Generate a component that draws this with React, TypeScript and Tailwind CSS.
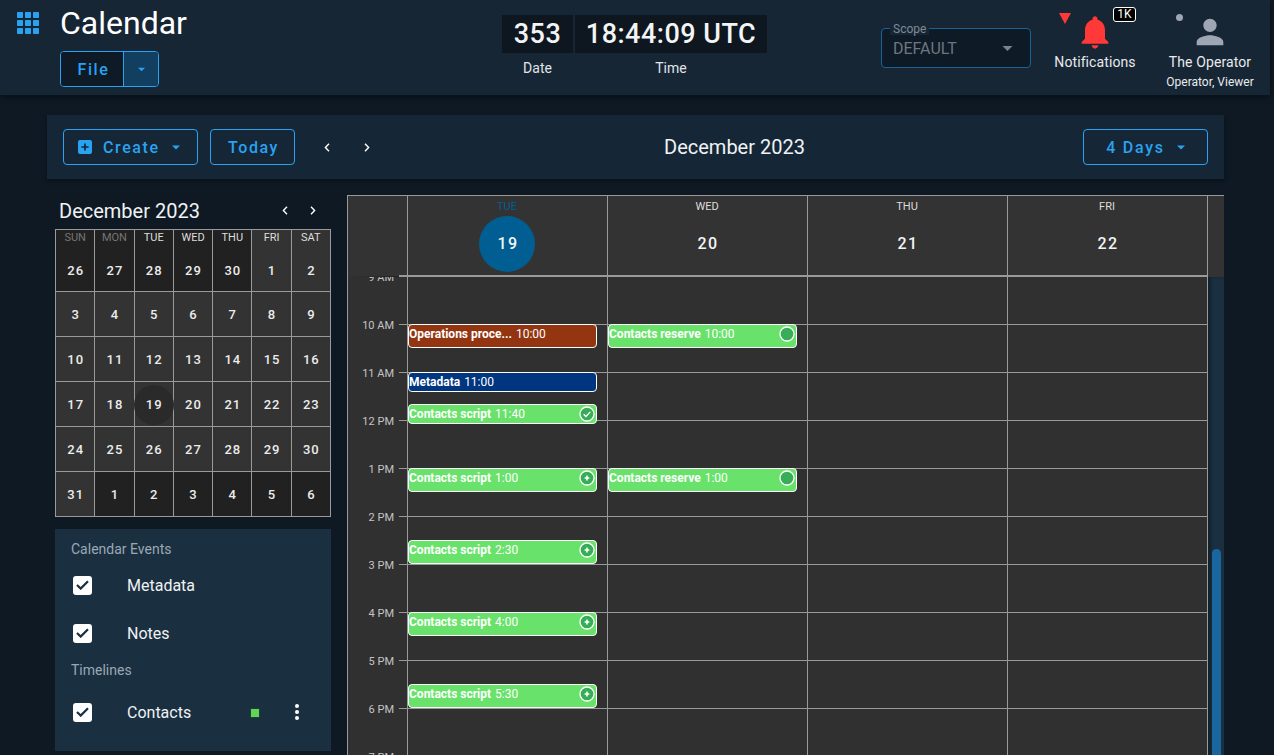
import React from "react";

const Caret = ({ className = "" }: { className?: string }) => (
  <svg width="10" height="5" viewBox="0 0 10 5" className={className}>
    <path d="M0 0h10L5 5z" fill="currentColor" />
  </svg>
);

const Chevron = ({ dir }: { dir: "l" | "r" }) => (
  <svg width="6" height="9" viewBox="0 0 6 9" fill="none" stroke="#ffffff" strokeWidth="1.4">
    <path d={dir === "l" ? "M5 .8 1.4 4.5 5 8.2" : "M1 .8 4.6 4.5 1 8.2"} />
  </svg>
);

const Check = () => (
  <div className="w-[19px] h-[19px] bg-white rounded-[3px] flex items-center justify-center">
    <svg width="13" height="10" viewBox="0 0 13 10" fill="none" stroke="#1a2f40" strokeWidth="2.2">
      <path d="M1 5l3.7 3.6L12 1.2" />
    </svg>
  </div>
);

const weekdays = [
  ["SUN", "text-[#767676]"],
  ["MON", "text-[#767676]"],
  ["TUE", "text-[#dddddd]"],
  ["WED", "text-[#dddddd]"],
  ["THU", "text-[#dddddd]"],
  ["FRI", "text-[#dddddd]"],
  ["SAT", "text-[#dddddd]"],
];

const weeks = [
  [26, 27, 28, 29, 30, 1, 2],
  [3, 4, 5, 6, 7, 8, 9],
  [10, 11, 12, 13, 14, 15, 16],
  [17, 18, 19, 20, 21, 22, 23],
  [24, 25, 26, 27, 28, 29, 30],
  [31, 1, 2, 3, 4, 5, 6],
];

const hours = ["9 AM", "10 AM", "11 AM", "12 PM", "1 PM", "2 PM", "3 PM", "4 PM", "5 PM", "6 PM", "7 PM"];

type Ev = { t: string; time: string; cls: string; icon?: "check" | "plus" | "dot" };

const tue: Ev[] = [
  { t: "Operations proce...", time: "10:00", cls: "top-[47px] h-[24px] bg-[#933510]" },
  { t: "Metadata", time: "11:00", cls: "top-[95px] h-[20px] bg-[#003580]" },
  { t: "Contacts script", time: "11:40", cls: "top-[127px] h-[20px] bg-[#69e26b]", icon: "check" },
  { t: "Contacts script", time: "1:00", cls: "top-[191px] h-[24px] bg-[#69e26b]", icon: "plus" },
  { t: "Contacts script", time: "2:30", cls: "top-[263px] h-[24px] bg-[#69e26b]", icon: "plus" },
  { t: "Contacts script", time: "4:00", cls: "top-[335px] h-[24px] bg-[#69e26b]", icon: "plus" },
  { t: "Contacts script", time: "5:30", cls: "top-[407px] h-[24px] bg-[#69e26b]", icon: "plus" },
];

const wed: Ev[] = [
  { t: "Contacts reserve", time: "10:00", cls: "top-[47px] h-[24px] bg-[#69e26b]", icon: "dot" },
  { t: "Contacts reserve", time: "1:00", cls: "top-[191px] h-[24px] bg-[#69e26b]", icon: "dot" },
];

const EvIcon = ({ kind }: { kind: "check" | "plus" | "dot" }) => (
  <svg width="16" height="16" viewBox="0 0 16 16" className="absolute right-[1px] top-[1px]">
    <circle cx="8" cy="8" r="7" fill="#37ad57" stroke="#ffffff" strokeWidth="1.3" />
    {kind === "check" && <path d="M4.6 8.2l2.3 2.3 4.4-4.6" fill="none" stroke="#ffffff" strokeWidth="1.3" />}
    {kind === "plus" && <path d="M8 5.6v4.8M5.6 8h4.8" fill="none" stroke="#ffffff" strokeWidth="1.6" />}
  </svg>
);

const DayCol = ({ events = [] }: { events?: Ev[] }) => (
  <div className="relative border-l border-[#9a9a9a]">
    {hours.map((h) => (
      <div key={h} className="h-[48px] border-b border-[#9a9a9a]" />
    ))}
    {events.map((e) => (
      <div
        key={e.t + e.time}
        className={`absolute left-0 w-[189px] border border-white rounded-[4px] text-white text-[12px] leading-[18px] whitespace-nowrap ${e.cls}`}
      >
        <span className="font-bold">{e.t}</span> <span className="ml-px">{e.time}</span>
        {e.icon && <EvIcon kind={e.icon} />}
      </div>
    ))}
  </div>
);

const HeadCell = ({ d, n, active }: { d: string; n: number; active?: boolean }) => (
  <div className="relative border-l border-[#9a9a9a] flex flex-col items-center pr-px">
    <div className={`text-[11px] leading-[14px] mt-[4px] ${active ? "text-[#005e92]" : "text-[#dddddd]"}`}>{d}</div>
    <div
      className={`mt-[2px] w-[56px] h-[56px] rounded-full flex items-center justify-center pl-[2px] text-[#f4f4f4] text-[16px] font-medium tracking-[1.5px] ${
        active ? "bg-[#005e92]" : ""
      }`}
    >
      {n}
    </div>
  </div>
);

export default function App() {
  return (
    <div className="w-[1274px] h-[755px] overflow-hidden bg-[#0e1923] text-white font-['Roboto',sans-serif]">
      {/* Global status bar */}
      <header className="w-[1270px] h-[95px] bg-[#172635] flex shadow-[0_2px_6px_rgba(0,0,0,0.4)]">
        <div className="w-[502px] flex">
          <div className="w-[60px] pl-[17px] pt-[12px]">
            <svg width="22" height="22" viewBox="0 0 22 22" fill="#2aa2f2">
              {[0, 8, 16].map((y) =>
                [0, 8, 16].map((x) => <rect key={`${x}-${y}`} x={x} y={y} width="6" height="6" rx="0.8" />)
              )}
            </svg>
          </div>
          <div>
            <div className="text-[32px] leading-[46px] font-normal">Calendar</div>
            <div className="mt-[5px] flex w-[99px] h-[36px] border border-[#2aa2f2] rounded-[4px] overflow-hidden">
              <div className="w-[62px] bg-[#0e1a26] text-[#2aa2f2] text-[16px] font-medium tracking-[1.6px] flex items-center justify-center pl-[3px] pt-[2px]">
                File
              </div>
              <div className="flex-1 bg-[#123f5f] border-l border-[#2aa2f2] text-[#2aa2f2] flex items-center justify-center">
                <Caret className="w-[7px]" />
              </div>
            </div>
          </div>
        </div>

        <div className="w-[265px] pt-[15px]">
          <div className="flex gap-[2px] h-[38px]">
            <div className="w-[71px] bg-[#0e1720] flex items-center justify-center text-[27px] font-medium tracking-[0.5px] text-[#f4f4f4]">353</div>
            <div className="w-[192px] bg-[#0e1720] flex items-center justify-center text-[27px] font-medium tracking-[0.5px] text-[#f4f4f4] whitespace-nowrap">
              18:44:09 UTC
            </div>
          </div>
          <div className="flex gap-[2px] mt-[7px] text-[14px] leading-[16px] text-[#e0e4e8]">
            <div className="w-[71px] text-center">Date</div>
            <div className="w-[192px] text-center">Time</div>
          </div>
        </div>

        <div className="ml-[114px] mt-[28px] relative w-[150px] h-[40px] border border-[#1a6196] rounded-[4px] bg-[#0e1a26] flex items-center justify-between pl-[11px] pr-[17px]">
          <span className="absolute left-[8px] -top-[6px] px-[3px] bg-[#172635] text-[12px] leading-[12px] text-[#7f8a95]">Scope</span>
          <span className="text-[16px] text-[#6d7680] pt-[2px]">DEFAULT</span>
          <Caret className="text-[#7b838c] w-[11px]" />
        </div>

        <div className="ml-[14px] w-[100px] flex flex-col items-center">
          <div className="relative h-[49px] w-[100px]">
            <svg width="12" height="11" viewBox="0 0 12 11" className="absolute left-[14px] top-[13px]">
              <path d="M0 0h12L6 11z" fill="#ff3838" />
            </svg>
            <svg width="40" height="40" viewBox="0 0 24 24" fill="#ff3838" className="absolute left-[30px] top-[12px]">
              <path d="M12 22c1.1 0 2-.9 2-2h-4c0 1.1.9 2 2 2zm6-6v-5c0-3.07-1.63-5.64-4.5-6.32V4c0-.83-.67-1.5-1.5-1.5s-1.5.67-1.5 1.5v.68C7.64 5.36 6 7.92 6 11v5l-2 2v1h16v-1l-2-2z" />
            </svg>
            <div className="absolute left-[68px] top-[7px] w-[23px] h-[15px] bg-black border border-white rounded-[3px] text-[12px] leading-[13px] text-center">
              1K
            </div>
          </div>
          <div className="mt-[5px] text-[14px] leading-[16px] text-[#e8ebee] tracking-[0.1px] whitespace-nowrap">Notifications</div>
        </div>

        <div className="ml-[15px] w-[100px] flex flex-col items-center">
          <div className="relative h-[49px] w-[100px]">
            <div className="absolute left-[16px] top-[14px] w-[7px] h-[7px] rounded-full bg-[#9ea6b3]" />
            <svg width="40" height="40" viewBox="0 0 24 24" fill="#9ea6b3" className="absolute left-[30px] top-[12px]">
              <path d="M12 12c2.21 0 4-1.79 4-4s-1.79-4-4-4-4 1.79-4 4 1.79 4 4 4zm0 2c-2.67 0-8 1.34-8 4v2h16v-2c0-2.66-5.33-4-8-4z" />
            </svg>
          </div>
          <div className="mt-[5px] text-[14px] leading-[16px] text-[#e8ebee] tracking-[0.1px] whitespace-nowrap">The Operator</div>
          <div className="mt-[4px] text-[12px] leading-[16px] text-[#e8ebee] whitespace-nowrap">Operator, Viewer</div>
        </div>
      </header>

      {/* Toolbar */}
      <div className="ml-[47px] mt-[20px] w-[1177px] h-[64px] bg-[#152736] flex items-center pl-[16px] pr-[16px] shadow-[0_2px_4px_rgba(0,0,0,0.3)]">
        <div className="w-[135px] h-[36px] border border-[#2aa2f2] rounded-[4px] flex items-center pl-[14px] text-[#2aa2f2]">
          <svg width="14" height="14" viewBox="0 0 14 14">
            <rect width="14" height="14" rx="2" fill="#2aa2f2" />
            <path d="M7 3.4v7.2M3.4 7h7.2" stroke="#152736" strokeWidth="1.7" />
          </svg>
          <span className="ml-[11px] text-[16px] font-medium tracking-[1.6px] pt-[2px]">Create</span>
          <Caret className="ml-[12px] w-[8px]" />
        </div>
        <div className="ml-[12px] w-[85px] h-[36px] border border-[#2aa2f2] rounded-[4px] flex items-center justify-center text-[#2aa2f2] text-[16px] font-medium tracking-[1.6px] pt-[2px] pl-[2px]">
          Today
        </div>
        <div className="ml-[28px] w-[8px] flex justify-center"><Chevron dir="l" /></div>
        <div className="ml-[32px] w-[8px] flex justify-center"><Chevron dir="r" /></div>
        <div className="flex-1 text-center text-[20px] text-[#f0f2f4] pl-[15px]">December 2023</div>
        <div className="w-[125px] h-[36px] border border-[#2aa2f2] rounded-[4px] flex items-center justify-center text-[#2aa2f2] text-[16px] font-medium tracking-[1.7px]">
          <span className="pt-[2px]">4 Days</span>
          <Caret className="ml-[12px] w-[8px]" />
        </div>
      </div>

      <div className="flex mt-[16px]">
        {/* Left rail */}
        <div className="ml-[55px] w-[276px]">
          <div className="h-[34px] flex items-center pl-[4px] pr-[15px]">
            <span className="flex-1 text-[20px] text-[#f0f2f4] mt-[-3px]">December 2023</span>
            <span className="mt-[-4px] flex"><Chevron dir="l" /></span>
            <span className="ml-[22px] mt-[-4px] flex"><Chevron dir="r" /></span>
          </div>
          <div className="grid grid-cols-7 gap-px p-px bg-[#9a9a9a] grid-rows-[61px_repeat(5,44px)]">
            {weeks.flatMap((w, i) =>
              w.map((d, j) => {
                const dim = (i === 0 && d > 20) || (i === 5 && d < 20);
                return (
                  <div
                    key={`${i}-${j}`}
                    className={`relative flex flex-col items-center text-[13px] font-medium text-[#ececec] tracking-[1px] ${
                      dim ? "bg-[#212121]" : "bg-[#333333]"
                    } ${i === 0 ? "" : "justify-center pt-[2px]"}`}
                  >
                    {i === 0 && (
                      <div className={`text-[11px] leading-[14px] mt-[1px] font-normal tracking-normal ${weekdays[j][1]}`}>{weekdays[j][0]}</div>
                    )}
                    {i === 3 && d === 19 ? (
                      <div className="w-[40px] h-[40px] rounded-full bg-[#2a2a2a] flex items-center justify-center pl-[1px]">{d}</div>
                    ) : (
                      <div className={i === 0 ? "mt-[16px] pl-[1px]" : "pl-[1px]"}>{d}</div>
                    )}
                  </div>
                );
              })
            )}
          </div>

          <div className="mt-[12px] h-[222px] bg-[#1a2f40] pl-[16px] pt-[10px]">
            <div className="text-[14px] leading-[20px] text-[#9aa8b4]">Calendar Events</div>
            <div className="mt-[2px] h-[48px] flex items-center pl-[2px]">
              <Check />
              <span className="ml-[35px] text-[16px] text-[#f0f2f4] pt-[2px]">Metadata</span>
            </div>
            <div className="h-[48px] flex items-center pl-[2px]">
              <Check />
              <span className="ml-[35px] text-[16px] text-[#f0f2f4] pt-[2px]">Notes</span>
            </div>
            <div className="mt-[3px] text-[14px] leading-[20px] text-[#9aa8b4]">Timelines</div>
            <div className="mt-[8px] h-[48px] flex items-center pl-[2px]">
              <Check />
              <span className="ml-[35px] w-[123px] text-[16px] text-[#f0f2f4] pt-[2px]">Contacts</span>
              <div className="w-[10px] h-[10px] bg-[#5cd65c] border border-[#23402a] mt-[2px]" />
              <svg width="4" height="16" viewBox="0 0 4 16" fill="#ffffff" className="ml-[35px]">
                <circle cx="2" cy="2" r="2" />
                <circle cx="2" cy="8" r="2" />
                <circle cx="2" cy="14" r="2" />
              </svg>
            </div>
          </div>
        </div>

        {/* Week view */}
        <div className="ml-[16px] w-[877px] h-[560px] bg-[#303030] border-t border-[#9a9a9a]">
          <div className="grid grid-cols-[60px_200px_200px_200px_200px_17px] h-[81px] bg-[#333333]">
            <div className="border-l border-[#9a9a9a] flex items-end">
              <div className="flex-1 h-px bg-linear-to-r from-[#333333] to-[#222222]" />
              <div className="w-[8px] h-[2px] bg-[#9a9a9a]" />
            </div>
            {[
              ["TUE", 19, true],
              ["WED", 20, false],
              ["THU", 21, false],
              ["FRI", 22, false],
            ].map(([d, n, a]) => (
              <div key={String(d)} className="grid border-b-2 border-[#9a9a9a]">
                <HeadCell d={String(d)} n={Number(n)} active={Boolean(a)} />
              </div>
            ))}
            <div className="border-l border-[#9a9a9a]" />
          </div>
          <div className="grid grid-cols-[60px_200px_200px_200px_200px_17px] h-[478px] overflow-hidden">
            <div className="border-l border-[#9a9a9a] -mt-[7px]">
              {hours.map((h) => (
                <div key={h} className="h-[48px] flex">
                  <div className="w-[46px] text-right text-[11px] leading-[16px] text-[#c4c4c4] whitespace-nowrap">{h}</div>
                  <div className="ml-[5px] w-[8px] h-px mt-[6px] bg-[#9a9a9a]" />
                </div>
              ))}
            </div>
            <DayCol events={tue} />
            <DayCol events={wed} />
            <DayCol />
            <DayCol />
            <div className="border-l border-[#9a9a9a] bg-[#1a3040] shadow-[inset_3px_0_3px_rgba(0,0,0,0.3)]">
              <div className="mt-[272px] ml-[4px] w-[9px] h-[300px] rounded-t-full bg-[#1a679f]" />
            </div>
          </div>
        </div>
      </div>
    </div>
  );
}
